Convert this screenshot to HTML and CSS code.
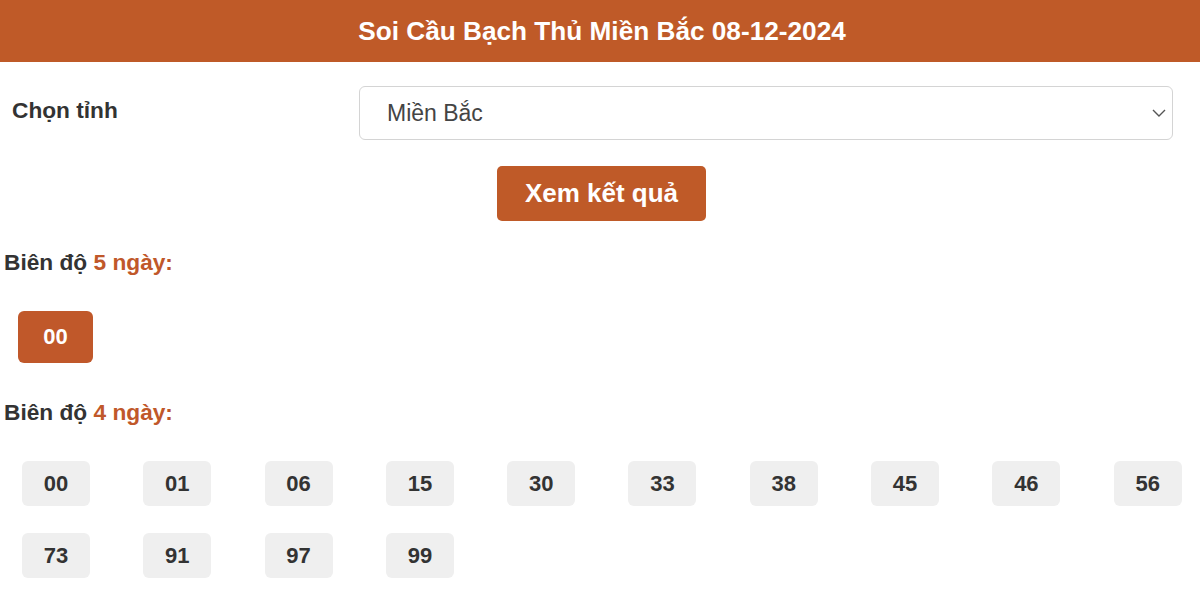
FILE: index.html
```html
<!DOCTYPE html>
<html lang="vi">
<head>
<meta charset="utf-8">
<title>Soi Cầu Bạch Thủ Miền Bắc</title>
<link rel="stylesheet" href="styles.css">
</head>
<body>
<header class="topbar">Soi Cầu Bạch Thủ Miền Bắc 08-12-2024</header>
<form class="filter">
  <label class="filter-label" for="tinh">Chọn tỉnh</label>
  <div class="select-wrap">
    <select id="tinh" class="select">
      <option>Miền Bắc</option>
    </select>
    <svg class="chev" width="14" height="8" viewBox="0 0 14 8"><path d="M1 1 L7 7 L13 1" fill="none" stroke="#555" stroke-width="1.4"/></svg>
  </div>
</form>
<div class="actions"><button type="button" class="btn">Xem kết quả</button></div>

<section class="block">
  <h3 class="block-title">Biên độ <span class="hl">5 ngày:</span></h3>
  <div class="top-list"><span class="num-hot">00</span></div>
</section>

<section class="block">
  <h3 class="block-title">Biên độ <span class="hl">4 ngày:</span></h3>
  <div class="num-grid">
    <span class="num">00</span><span class="num">01</span><span class="num">06</span><span class="num">15</span><span class="num">30</span>
    <span class="num">33</span><span class="num">38</span><span class="num">45</span><span class="num">46</span><span class="num">56</span>
    <span class="num">73</span><span class="num">91</span><span class="num">97</span><span class="num">99</span>
  </div>
</section>
</body>
</html>
```

FILE: styles.css
```css
* { box-sizing: border-box; }
html, body { margin: 0; padding: 0; background: #fff; }
body {
  font-family: "Liberation Sans", Arial, sans-serif;
  color: #333;
  width: 1200px;
}
.topbar {
  height: 62px;
  background: #bf5a28;
  color: #fff;
  font-weight: bold;
  font-size: 26.2px;
  display: flex;
  align-items: center;
  justify-content: center;
  padding-left: 4px;
}
.filter {
  display: grid;
  grid-template-columns: 347px 1fr;
  align-items: center;
  padding: 0 27px 0 12px;
  margin-top: 24px;
}
.filter-label {
  font-weight: bold;
  font-size: 22.7px;
  color: #333;
  margin-top: -6px;
}
.select-wrap { position: relative; }
.select {
  appearance: none;
  -webkit-appearance: none;
  width: 100%;
  height: 54px;
  border: 1.5px solid #d4d4d4;
  border-radius: 6px;
  background: #fff;
  font-family: "Liberation Sans", Arial, sans-serif;
  font-size: 23px;
  color: #444;
  padding: 0 0 0 27px;
  margin: 0;
}
.chev {
  position: absolute;
  right: 7px;
  top: 23px;
  pointer-events: none;
}
.actions {
  display: flex;
  justify-content: center;
  margin-top: 26px;
  padding-left: 3px;
}
.btn {
  width: 209px;
  height: 55px;
  background: #bf5a28;
  color: #fff;
  border: none;
  border-radius: 5px;
  font-family: "Liberation Sans", Arial, sans-serif;
  font-weight: bold;
  font-size: 26px;
}
.block { padding-left: 4px; }
.block-title {
  margin: 0;
  font-size: 22.7px;
  line-height: 28px;
  font-weight: bold;
  color: #333;
}
.block:first-of-type .block-title { margin-top: 27px; }
.hl { color: #c0582a; }
.top-list {
  display: flex;
  padding: 35px 0 35px 14px;
}
.num-hot {
  width: 75px;
  height: 52px;
  border-radius: 6px;
  background: #c0582a;
  color: #fff;
  font-weight: bold;
  font-size: 22px;
  display: flex;
  align-items: center;
  justify-content: center;
}
.num-grid {
  display: grid;
  grid-template-columns: repeat(10, 68px);
  column-gap: 53.3px;
  row-gap: 27px;
  padding: 35px 0 0 18px;
}
.num {
  height: 45px;
  border-radius: 6px;
  background: #efefef;
  color: #333;
  font-weight: bold;
  font-size: 22px;
  display: flex;
  align-items: center;
  justify-content: center;
}
```
